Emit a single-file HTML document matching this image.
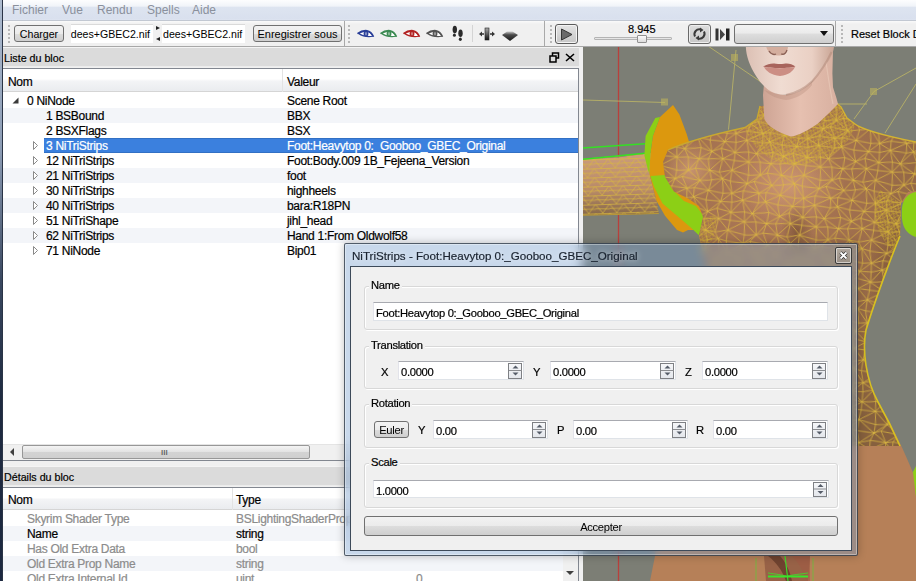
<!DOCTYPE html>
<html><head><meta charset="utf-8">
<style>
*{margin:0;padding:0;box-sizing:border-box}
html,body{width:916px;height:581px;overflow:hidden;background:#f0f0f0}
body{position:relative;font-family:"Liberation Sans",sans-serif;font-size:12px;letter-spacing:0;color:#000}
.a{position:absolute}
.t{position:absolute;white-space:nowrap;line-height:15px;letter-spacing:-0.3px;margin-top:1px;-webkit-text-stroke:0.2px currentColor}
.btn,.glbl{letter-spacing:-0.3px}
/* window border */
#wb{left:0;top:0;width:3px;height:581px;z-index:5;background:linear-gradient(90deg,transparent 0,transparent 2px,#2a3446 2px),linear-gradient(#aebcd0 0,#8c9cb4 150px,#3a4860 280px,#1e2a40 400px,#1c2840 581px)}
#menu{left:3px;top:0;width:913px;height:21px;background:linear-gradient(#fdfdfe 0,#f1f4f9 6px,#dde4f0 7.5px,#d9e0ee 19px,#dfe5f1 20px);border-bottom:1px solid #c2c8d2}
#menu span{position:absolute;top:3px;color:#8a909c;font-size:12px}
#tool{left:3px;top:21px;width:913px;height:26px;background:linear-gradient(#fafafa 0,#f0f0f0 3px,#f0f0f0 24px);border-bottom:1px solid #a8a8a8}
.btn{position:absolute;border:1px solid #707070;border-radius:3px;background:linear-gradient(#f2f2f2 0,#ebebeb 50%,#dddddd 50%,#cfcfcf 100%);text-align:center;line-height:15px;padding-top:1px}
.fld{position:absolute;background:#fff;overflow:hidden;white-space:nowrap}
.grip{position:absolute;width:2px;background:repeating-linear-gradient(#b8b8b8 0,#b8b8b8 2px,transparent 2px,transparent 4px)}
.dtitle{position:absolute;background:#dbdbdb;border-top:1px solid #f4f4f4;border-bottom:1px solid #ececec}
.tree{position:absolute;background:#fff;border:1px solid #828790;border-left:none}
.hdr{position:absolute;height:23px;background:linear-gradient(#fff 0,#fff 45%,#f3f4f6 55%,#eaecef 100%);border-bottom:1px solid #d5d5d5}
.row{position:absolute;height:15px;width:100%}
.alt{background:#f3f5f9}
.sel{background:#3c7fd8;color:#fff}
.gray{color:#8c8c8c}
#vp{left:583px;top:46px;width:333px;height:535px;background:#7c7b72;overflow:hidden}
#dlg{left:344px;top:243px;width:514px;height:313px}
.grp{position:absolute;border:1px solid #d8d8d8;border-radius:3px;box-shadow:inset 1px 1px 0 #fff,1px 1px 0 #fff}
.glbl{position:absolute;background:#f0f0f0;padding:0 2px;line-height:15px;-webkit-text-stroke:0.2px currentColor}
.sp{position:absolute;background:#fff;border:1px solid #dfe3e8;border-top-color:#a8aab0;border-left-color:#e2e3ea}
.spb{position:absolute;right:1px;top:1px;width:14px;bottom:1px;border:1px solid #7e8084;background:linear-gradient(#f6f7f9,#e4e7ec)}
</style></head><body>
<div class="a" id="wb"></div>
<div class="a" id="menu">
<span style="left:9px">Fichier</span><span style="left:59px">Vue</span><span style="left:94px">Rendu</span><span style="left:144px">Spells</span><span style="left:189px">Aide</span>
</div>
<div class="a" id="tool"></div>
<div class="a" style="left:344px;top:21px;width:1px;height:25px;background:#a9a9a9"></div>
<div class="a" style="left:544px;top:21px;width:1px;height:25px;background:#a9a9a9"></div>
<div class="a" style="left:835px;top:21px;width:1px;height:25px;background:#a9a9a9"></div>

<div class="grip" style="left:8px;top:25px;height:18px"></div>
<div class="btn" style="left:14px;top:25px;width:50px;height:17px;font-size:10.6px;letter-spacing:0">Charger</div>
<div class="fld" style="left:71px;top:24px;width:82px;height:19px;font-size:10.6px;letter-spacing:0;border-top:1px solid #dadada"><span style="position:absolute;right:3px;top:3px;line-height:13px">dees+GBEC2.nif</span></div>
<svg class="a" style="left:155px;top:25px" width="6" height="17"><path d="M1 1 L5 3 L1 5 Z M5 12 L1 14 L5 16 Z" fill="#222"/></svg>
<div class="fld" style="left:162px;top:24px;width:83px;height:19px;font-size:10.6px;letter-spacing:0;border-top:1px solid #dadada"><span style="position:absolute;left:1px;top:3px;line-height:13px">dees+GBEC2.nif</span></div>
<div class="btn" style="left:253px;top:25px;width:89px;height:17px;font-size:11px;letter-spacing:0">Enregistrer sous</div>
<div class="grip" style="left:348px;top:25px;height:18px"></div>
<div class="grip" style="left:550px;top:25px;height:18px"></div>
<div class="grip" style="left:841px;top:25px;height:18px"></div>
<div class="t" style="left:851px;top:26px;font-size:11px;letter-spacing:0">Reset Block Details</div>
<!-- eyes -->
<svg class="a" style="left:356px;top:28px" width="90" height="13">
<defs>
<g id="eye"><path d="M2.5 5.5 C5 3.8 8 3.2 10.5 3.4 C13.5 3.7 15.5 5.5 16.8 8.3 C13 8.9 7 8.5 2.5 5.5 Z" fill="#fff" stroke="currentColor" stroke-width="1.1"/><path d="M1.5 5.6 C5 3 8.5 2.4 11 2.7 C14 3.1 16 5 17.5 8.8" fill="none" stroke="currentColor" stroke-width="1.6"/><ellipse cx="10" cy="5.8" rx="2.4" ry="2.6" fill="currentColor"/><ellipse cx="10" cy="5.8" rx="1.1" ry="1.7" fill="#fff" opacity="0.4"/></g>
</defs>
<use href="#eye" x="0" y="0" style="color:#2a3f98"/>
<use href="#eye" x="23" y="0" style="color:#3c8a52"/>
<use href="#eye" x="46" y="0" style="color:#b22222"/>
<use href="#eye" x="69" y="0" style="color:#545454"/>
</svg>
<!-- footprints -->
<svg class="a" style="left:451px;top:25px" width="14" height="18">
<ellipse cx="3.8" cy="4.5" rx="2.2" ry="3.8" fill="#2a2a2a"/><ellipse cx="3.4" cy="10.2" rx="1.5" ry="1.6" fill="#2a2a2a"/>
<ellipse cx="9.5" cy="8.3" rx="2.2" ry="3.8" fill="#2a2a2a"/><ellipse cx="9.3" cy="14.2" rx="1.5" ry="1.7" fill="#2a2a2a"/>
</svg>
<div class="a" style="left:472px;top:25px;width:1px;height:17px;background:#d4d4d4"></div>
<!-- move -->
<svg class="a" style="left:478px;top:27px" width="18" height="14">
<defs><linearGradient id="bar" x1="0" y1="0" x2="0" y2="1"><stop offset="0" stop-color="#aaa"/><stop offset="1" stop-color="#111"/></linearGradient></defs>
<rect x="7" y="1" width="4" height="12" fill="url(#bar)" stroke="#222" stroke-width="0.6"/>
<path d="M1 7 L4 4.5 L4 9.5 Z M17 7 L14 4.5 L14 9.5 Z" fill="#333"/><path d="M3 7 H6 M12 7 H15" stroke="#333" stroke-width="1.4"/>
</svg>
<!-- diamond -->
<svg class="a" style="left:501px;top:30px" width="18" height="12">
<defs><linearGradient id="dia" x1="0" y1="0" x2="0" y2="1"><stop offset="0" stop-color="#c8c8c8"/><stop offset="0.35" stop-color="#4a4a4a"/><stop offset="1" stop-color="#1a1a1a"/></linearGradient></defs>
<path d="M1 5 L6 1.5 L11.5 1.5 L17 5 L9 11 Z" fill="url(#dia)"/>
</svg>
<!-- play button -->
<div class="a" style="left:555px;top:24px;width:23px;height:20px;border:1px solid #5a5a5a;border-radius:3px;background:linear-gradient(#e4e4e4,#c6c6c6);box-shadow:inset 0 0 0 1px #f4f4f4"></div>
<svg class="a" style="left:560px;top:28px" width="13" height="13"><path d="M1.5 1 L12 6.5 L1.5 12 Z" fill="#6a6a6a" stroke="#2a2a2a" stroke-width="0.9"/></svg>
<!-- slider -->
<div class="t" style="left:628px;top:21px;font-size:11px;letter-spacing:0">8.945</div>
<div class="a" style="left:594px;top:37px;width:78px;height:3px;border:1px solid #b4b4b4;background:#e6e6e6;border-radius:1px"></div>
<div class="a" style="left:637px;top:35px;width:10px;height:8px;border:1px solid #909090;border-radius:1px;background:linear-gradient(#fbfbfb,#dcdcdc)"></div>
<!-- loop button -->
<div class="a" style="left:688px;top:24px;width:23px;height:20px;border:1px solid #6a6a6a;border-radius:3px;background:linear-gradient(#dedede,#c8c8c8);box-shadow:inset 0 0 0 1px #eee"></div>
<svg class="a" style="left:692px;top:27px" width="15" height="14"><path d="M3 9.5 A5 5 0 0 1 9 2.5" stroke="#3a3a3a" stroke-width="2" fill="none"/><path d="M8 0.5 L11.5 3 L8 5.5 Z" fill="#3a3a3a"/><path d="M12 4.5 A5 5 0 0 1 6 11.5" stroke="#3a3a3a" stroke-width="2" fill="none"/><path d="M7 13.5 L3.5 11 L7 8.5 Z" fill="#3a3a3a"/></svg>
<!-- next -->
<svg class="a" style="left:715px;top:28px" width="15" height="13"><rect x="0.5" y="0.5" width="3" height="12" fill="#333"/><path d="M5 1 L10 6.5 L5 12 Z" fill="#444"/><rect x="11" y="0.5" width="3.5" height="12" fill="#222"/></svg>
<!-- combo -->
<div class="a" style="left:734px;top:24px;width:100px;height:20px;border:1px solid #707070;border-radius:3px;background:linear-gradient(#f2f2f2 0,#ebebeb 45%,#dddddd 50%,#cfcfcf 100%)"></div>
<svg class="a" style="left:820px;top:31px" width="9" height="6"><path d="M0 0 H8 L4 5 Z" fill="#111"/></svg>
<!-- Liste du bloc dock -->
<div class="dtitle" style="left:3px;top:47px;width:576px;height:20px"></div>
<div class="t" style="left:4px;top:50px;font-size:10.7px;letter-spacing:0">Liste du bloc</div>
<!-- dock buttons -->
<svg class="a" style="left:549px;top:52px" width="11" height="11"><rect x="3.5" y="1" width="6" height="5" fill="none" stroke="#000" stroke-width="1.5"/><rect x="1" y="4" width="6" height="6" fill="#dcdcdc" stroke="#000" stroke-width="1.5"/></svg>
<svg class="a" style="left:565px;top:53px" width="10" height="9"><path d="M1 1 L9 8 M9 1 L1 8" stroke="#000" stroke-width="1.6"/></svg>



<div class="a" style="left:3px;top:68px;width:576px;height:393px;background:#fff;border-top:1px solid #828790;border-right:1px solid #828790;border-bottom:1px solid #828790"></div>
<div class="hdr" style="left:3px;top:69px;width:575px"></div>
<div class="a" style="left:282px;top:69px;width:1px;height:23px;background:#e3e3e3"></div>
<div class="t" style="left:8px;top:74px">Nom</div>
<div class="t" style="left:287px;top:74px">Valeur</div>
<svg class="a" style="left:12px;top:97px" width="8" height="8"><path d="M6.5 0.5 L6.5 6.5 L0.5 6.5 Z" fill="#3a3a3a"/></svg>
<div class="t" style="left:27px;top:93px;color:#000">0 NiNode</div>
<div class="t" style="left:287px;top:93px;color:#000">Scene Root</div>
<div class="a alt" style="left:3px;top:108px;width:575px;height:15px"></div>
<div class="t" style="left:46px;top:108px;color:#000">1 BSBound</div>
<div class="t" style="left:287px;top:108px;color:#000">BBX</div>
<div class="t" style="left:46px;top:123px;color:#000">2 BSXFlags</div>
<div class="t" style="left:287px;top:123px;color:#000">BSX</div>
<div class="a sel" style="left:44px;top:138px;width:534px;height:15px;border-top:1px solid #3270c4;border-bottom:1px solid #3270c4;background:#3b80de"></div>
<svg class="a" style="left:32px;top:141px" width="8" height="10"><path d="M1.5 0.5 L5.5 4.5 L1.5 8.5 Z" fill="#fff" stroke="#8a8a8a"/></svg>
<div class="t" style="left:46px;top:138px;color:#fff">3 NiTriStrips</div>
<div class="t" style="left:287px;top:138px;color:#fff">Foot:Heavytop 0:_Gooboo_GBEC_Original</div>
<svg class="a" style="left:32px;top:156px" width="8" height="10"><path d="M1.5 0.5 L5.5 4.5 L1.5 8.5 Z" fill="#fff" stroke="#8a8a8a"/></svg>
<div class="t" style="left:46px;top:153px;color:#000">12 NiTriStrips</div>
<div class="t" style="left:287px;top:153px;color:#000">Foot:Body.009 1B_Fejeena_Version</div>
<div class="a alt" style="left:3px;top:168px;width:575px;height:15px"></div>
<svg class="a" style="left:32px;top:171px" width="8" height="10"><path d="M1.5 0.5 L5.5 4.5 L1.5 8.5 Z" fill="#fff" stroke="#8a8a8a"/></svg>
<div class="t" style="left:46px;top:168px;color:#000">21 NiTriStrips</div>
<div class="t" style="left:287px;top:168px;color:#000">foot</div>
<svg class="a" style="left:32px;top:186px" width="8" height="10"><path d="M1.5 0.5 L5.5 4.5 L1.5 8.5 Z" fill="#fff" stroke="#8a8a8a"/></svg>
<div class="t" style="left:46px;top:183px;color:#000">30 NiTriStrips</div>
<div class="t" style="left:287px;top:183px;color:#000">highheels</div>
<div class="a alt" style="left:3px;top:198px;width:575px;height:15px"></div>
<svg class="a" style="left:32px;top:201px" width="8" height="10"><path d="M1.5 0.5 L5.5 4.5 L1.5 8.5 Z" fill="#fff" stroke="#8a8a8a"/></svg>
<div class="t" style="left:46px;top:198px;color:#000">40 NiTriStrips</div>
<div class="t" style="left:287px;top:198px;color:#000">bara:R18PN</div>
<svg class="a" style="left:32px;top:216px" width="8" height="10"><path d="M1.5 0.5 L5.5 4.5 L1.5 8.5 Z" fill="#fff" stroke="#8a8a8a"/></svg>
<div class="t" style="left:46px;top:213px;color:#000">51 NiTriShape</div>
<div class="t" style="left:287px;top:213px;color:#000">jihl_head</div>
<div class="a alt" style="left:3px;top:228px;width:575px;height:15px"></div>
<svg class="a" style="left:32px;top:231px" width="8" height="10"><path d="M1.5 0.5 L5.5 4.5 L1.5 8.5 Z" fill="#fff" stroke="#8a8a8a"/></svg>
<div class="t" style="left:46px;top:228px;color:#000">62 NiTriStrips</div>
<div class="t" style="left:287px;top:228px;color:#000">Hand 1:From Oldwolf58</div>
<svg class="a" style="left:32px;top:246px" width="8" height="10"><path d="M1.5 0.5 L5.5 4.5 L1.5 8.5 Z" fill="#fff" stroke="#8a8a8a"/></svg>
<div class="t" style="left:46px;top:243px;color:#000">71 NiNode</div>
<div class="t" style="left:287px;top:243px;color:#000">Bip01</div>
<!-- hscroll -->
<div class="a" style="left:3px;top:444px;width:575px;height:16px;background:#f0f0f0;border-top:1px solid #e4e4e4"></div>
<svg class="a" style="left:9px;top:448px" width="6" height="8"><path d="M5 0 L5 8 L1 4 Z" fill="#404040"/></svg>
<div class="a" style="left:22px;top:445px;width:288px;height:14px;border:1px solid #979797;border-radius:2px;background:linear-gradient(#f4f4f4,#e2e2e2 50%,#d3d3d3 51%,#cfcfcf)"></div>
<div class="t" style="left:161px;top:444px;font-size:8px;letter-spacing:0;color:#555">III</div>

<!-- details dock -->
<div class="dtitle" style="left:3px;top:466px;width:576px;height:20px"></div>
<div class="t" style="left:4px;top:469px;font-size:10.7px;letter-spacing:0">Détails du bloc</div>
<div class="a" style="left:3px;top:487px;width:576px;height:100px;background:#fff;border-top:1px solid #828790;border-right:1px solid #828790"></div>
<div class="hdr" style="left:3px;top:488px;width:575px;height:22px"></div>
<div class="a" style="left:232px;top:488px;width:1px;height:22px;background:#e3e3e3"></div>
<div class="t" style="left:8px;top:492px">Nom</div>
<div class="t" style="left:236px;top:492px">Type</div>
<div class="a" style="left:563px;top:488px;width:15px;height:93px;background:#f0f0f0"></div>
<div class="t" style="left:27px;top:511px;color:#8c8c8c">Skyrim Shader Type</div>
<div class="t" style="left:236px;top:511px;color:#8c8c8c">BSLightingShaderProperty</div>
<div class="a alt" style="left:3px;top:526px;width:560px;height:15px"></div>
<div class="t" style="left:27px;top:526px;color:#000">Name</div>
<div class="t" style="left:236px;top:526px;color:#000">string</div>
<div class="t" style="left:27px;top:541px;color:#8c8c8c">Has Old Extra Data</div>
<div class="t" style="left:236px;top:541px;color:#8c8c8c">bool</div>
<div class="a alt" style="left:3px;top:556px;width:560px;height:15px"></div>
<div class="t" style="left:27px;top:556px;color:#8c8c8c">Old Extra Prop Name</div>
<div class="t" style="left:236px;top:556px;color:#8c8c8c">string</div>
<div class="t" style="left:27px;top:571px;color:#8c8c8c">Old Extra Internal Id</div>
<div class="t" style="left:236px;top:571px;color:#8c8c8c">uint</div>
<div class="t" style="left:416px;top:571px;color:#8c8c8c">0</div>
<svg class="a" style="left:566px;top:571px" width="8" height="5"><path d="M0 0 L8 0 L4 4 Z" fill="#404040"/></svg>

<svg class="a" style="left:583px;top:47px" width="333" height="534" viewBox="583 47 333 534">
<defs>
<pattern id="mesh" patternUnits="userSpaceOnUse" width="72" height="60" patternTransform="rotate(4)"><path d="M-11.6 -10.3L-2.4 -11.0M-11.6 -10.3L-14.5 -0.8M-11.6 -10.3L-0.3 0.3M-2.4 -11.0L12.2 -12.2M-2.4 -11.0L-0.3 0.3M12.2 -12.2L-0.3 0.3M12.2 -12.2L23.7 -11.1M12.2 -12.2L9.5 1.5M12.2 -12.2L22.1 -1.3M23.7 -11.1L38.1 -10.6M23.7 -11.1L22.1 -1.3M38.1 -10.6L22.1 -1.3M38.1 -10.6L49.7 -11.2M38.1 -10.6L39.0 2.5M38.1 -10.6L50.7 1.7M49.7 -11.2L60.4 -10.3M49.7 -11.2L50.7 1.7M60.4 -10.3L50.7 1.7M60.4 -10.3L69.6 -11.0M60.4 -10.3L57.5 -0.8M60.4 -10.3L71.7 0.3M69.6 -11.0L84.2 -12.2M69.6 -11.0L71.7 0.3M84.2 -12.2L71.7 0.3M-14.5 -0.8L-0.3 0.3M-14.5 -0.8L-9.2 11.3M-0.3 0.3L-9.2 11.3M-0.3 0.3L9.5 1.5M-0.3 0.3L2.5 9.8M-0.3 0.3L13.2 7.7M9.5 1.5L22.1 -1.3M9.5 1.5L13.2 7.7M22.1 -1.3L13.2 7.7M22.1 -1.3L39.0 2.5M22.1 -1.3L21.2 9.8M22.1 -1.3L38.0 11.0M39.0 2.5L50.7 1.7M39.0 2.5L38.0 11.0M50.7 1.7L38.0 11.0M50.7 1.7L57.5 -0.8M50.7 1.7L45.0 8.5M50.7 1.7L62.8 11.3M57.5 -0.8L71.7 0.3M57.5 -0.8L62.8 11.3M71.7 0.3L62.8 11.3M71.7 0.3L81.5 1.5M71.7 0.3L74.5 9.8M71.7 0.3L85.2 7.7M-9.2 11.3L2.5 9.8M-9.2 11.3L-14.3 18.7M-9.2 11.3L0.0 20.4M2.5 9.8L13.2 7.7M2.5 9.8L0.0 20.4M13.2 7.7L0.0 20.4M13.2 7.7L21.2 9.8M13.2 7.7L14.9 22.3M13.2 7.7L23.6 21.7M21.2 9.8L38.0 11.0M21.2 9.8L23.6 21.7M38.0 11.0L23.6 21.7M38.0 11.0L45.0 8.5M38.0 11.0L34.9 18.6M38.0 11.0L50.5 19.8M45.0 8.5L62.8 11.3M45.0 8.5L50.5 19.8M62.8 11.3L50.5 19.8M62.8 11.3L74.5 9.8M62.8 11.3L57.7 18.7M62.8 11.3L72.0 20.4M74.5 9.8L85.2 7.7M74.5 9.8L72.0 20.4M85.2 7.7L72.0 20.4M-14.3 18.7L0.0 20.4M-14.3 18.7L-14.4 27.8M0.0 20.4L-14.4 27.8M0.0 20.4L14.9 22.3M0.0 20.4L-1.9 30.1M0.0 20.4L12.9 30.6M14.9 22.3L23.6 21.7M14.9 22.3L12.9 30.6M23.6 21.7L12.9 30.6M23.6 21.7L34.9 18.6M23.6 21.7L24.1 30.7M23.6 21.7L34.7 27.9M34.9 18.6L50.5 19.8M34.9 18.6L34.7 27.9M50.5 19.8L34.7 27.9M50.5 19.8L57.7 18.7M50.5 19.8L50.9 29.5M50.5 19.8L57.6 27.8M57.7 18.7L72.0 20.4M57.7 18.7L57.6 27.8M72.0 20.4L57.6 27.8M72.0 20.4L86.9 22.3M72.0 20.4L70.1 30.1M72.0 20.4L84.9 30.6M-14.4 27.8L-1.9 30.1M-14.4 27.8L-10.2 38.4M-14.4 27.8L0.8 41.5M-1.9 30.1L12.9 30.6M-1.9 30.1L0.8 41.5M12.9 30.6L0.8 41.5M12.9 30.6L24.1 30.7M12.9 30.6L9.9 37.6M12.9 30.6L24.0 40.8M24.1 30.7L34.7 27.9M24.1 30.7L24.0 40.8M34.7 27.9L24.0 40.8M34.7 27.9L50.9 29.5M34.7 27.9L37.6 39.5M34.7 27.9L45.4 40.6M50.9 29.5L57.6 27.8M50.9 29.5L45.4 40.6M57.6 27.8L45.4 40.6M57.6 27.8L70.1 30.1M57.6 27.8L61.8 38.4M57.6 27.8L72.8 41.5M70.1 30.1L84.9 30.6M70.1 30.1L72.8 41.5M84.9 30.6L72.8 41.5M-10.2 38.4L0.8 41.5M-10.2 38.4L-11.6 49.7M0.8 41.5L-11.6 49.7M0.8 41.5L9.9 37.6M0.8 41.5L-2.4 49.0M0.8 41.5L12.2 47.8M9.9 37.6L24.0 40.8M9.9 37.6L12.2 47.8M24.0 40.8L12.2 47.8M24.0 40.8L37.6 39.5M24.0 40.8L23.7 48.9M24.0 40.8L38.1 49.4M37.6 39.5L45.4 40.6M37.6 39.5L38.1 49.4M45.4 40.6L38.1 49.4M45.4 40.6L61.8 38.4M45.4 40.6L49.7 48.8M45.4 40.6L60.4 49.7M61.8 38.4L72.8 41.5M61.8 38.4L60.4 49.7M72.8 41.5L60.4 49.7M72.8 41.5L81.9 37.6M72.8 41.5L69.6 49.0M72.8 41.5L84.2 47.8M-11.6 49.7L-2.4 49.0M-11.6 49.7L-14.5 59.2M-11.6 49.7L-0.3 60.3M-2.4 49.0L12.2 47.8M-2.4 49.0L-0.3 60.3M12.2 47.8L-0.3 60.3M12.2 47.8L23.7 48.9M12.2 47.8L9.5 61.5M12.2 47.8L22.1 58.7M23.7 48.9L38.1 49.4M23.7 48.9L22.1 58.7M38.1 49.4L22.1 58.7M38.1 49.4L49.7 48.8M38.1 49.4L39.0 62.5M38.1 49.4L50.7 61.7M49.7 48.8L60.4 49.7M49.7 48.8L50.7 61.7M60.4 49.7L50.7 61.7M60.4 49.7L69.6 49.0M60.4 49.7L57.5 59.2M60.4 49.7L71.7 60.3M69.6 49.0L84.2 47.8M69.6 49.0L71.7 60.3M84.2 47.8L71.7 60.3M-14.5 59.2L-0.3 60.3M-14.5 59.2L-9.2 71.3M-0.3 60.3L-9.2 71.3M-0.3 60.3L9.5 61.5M-0.3 60.3L2.5 69.8M-0.3 60.3L13.2 67.7M9.5 61.5L22.1 58.7M9.5 61.5L13.2 67.7M22.1 58.7L13.2 67.7M22.1 58.7L39.0 62.5M22.1 58.7L21.2 69.8M22.1 58.7L38.0 71.0M39.0 62.5L50.7 61.7M39.0 62.5L38.0 71.0M50.7 61.7L38.0 71.0M50.7 61.7L57.5 59.2M50.7 61.7L45.0 68.5M50.7 61.7L62.8 71.3M57.5 59.2L71.7 60.3M57.5 59.2L62.8 71.3M71.7 60.3L62.8 71.3M71.7 60.3L81.5 61.5M71.7 60.3L74.5 69.8M71.7 60.3L85.2 67.7" stroke="#e0bc40" stroke-width="0.7" fill="none"/></pattern>
<pattern id="mesh2" patternUnits="userSpaceOnUse" width="5" height="5" patternTransform="rotate(25)">
<path d="M0 0 L5 0 M0 0 L2.5 5 M5 0 L2.5 5" stroke="#d8bc28" stroke-width="0.7" fill="none"/>
</pattern>
<pattern id="mesh3" patternUnits="userSpaceOnUse" width="14" height="9" patternTransform="rotate(-2)"><path d="M0 0.5 L14 0.5 M0 4.5 L14 5 M0 0 L7 9 M14 0 L7 9" stroke="#d8b840" stroke-width="0.7" fill="none"/></pattern>
<clipPath id="tclip"><path d="M760 106 L757 119 L745 127.5 C720 133 690 140 668 150 L663 162 L665 177 L674 191.5 L688.5 198.7 L699 206 L703 217 L699 235 C706 270 714 300 716 340 C712 360 705 400 700 446 L900 446 C893 430 886 416 878 402 C866 380 862 350 866 330 C875 300 892 255 900 236 L901 203 L908 192 L916 191 L916 142 C880 135 860 128 855 124 L847 118 L841 107 L836.5 103 Z"/></clipPath>
<linearGradient id="faceg" x1="0" y1="0" x2="1" y2="0">
<stop offset="0" stop-color="#dcc0b4"/><stop offset="0.4" stop-color="#f0dcd2"/><stop offset="0.75" stop-color="#ead0c4"/><stop offset="1" stop-color="#c8a494"/>
</linearGradient>
<linearGradient id="neckg" x1="0" y1="0" x2="1" y2="0">
<stop offset="0" stop-color="#cea494"/><stop offset="0.5" stop-color="#e6c0b0"/><stop offset="1" stop-color="#d8b0a0"/>
</linearGradient>
<linearGradient id="armg" x1="0" y1="0" x2="0" y2="1">
<stop offset="0" stop-color="#cc9c7c"/><stop offset="0.6" stop-color="#b88a68"/><stop offset="1" stop-color="#86684a"/>
</linearGradient>
<radialGradient id="torsog" cx="0.42" cy="0.22" r="0.8">
<stop offset="0" stop-color="#b07a5a"/><stop offset="0.5" stop-color="#9e6e4c"/><stop offset="1" stop-color="#86603e"/>
</radialGradient>
<radialGradient id="lite" cx="0.5" cy="0.5" r="0.5">
<stop offset="0" stop-color="#e6b08a" stop-opacity="0.55"/><stop offset="1" stop-color="#e6b08a" stop-opacity="0"/>
</radialGradient>
<radialGradient id="dark" cx="0.5" cy="0.5" r="0.5">
<stop offset="0" stop-color="#5a3a22" stop-opacity="0.45"/><stop offset="1" stop-color="#5a3a22" stop-opacity="0"/>
</radialGradient>
</defs>
<rect x="583" y="46" width="333" height="535" fill="#7c7e75"/>
<line x1="618.5" y1="46" x2="618.5" y2="581" stroke="#b8403c" stroke-width="1.3"/>
<g stroke="#c4bc64" stroke-width="1" fill="none" opacity="0.75">
<path d="M583 100 L665 102.5"/>
<path d="M708 46 L761 82"/>
<path d="M736 50 L728.5 129.6"/>
<path d="M916 68 L874 91.5 L854 119"/>
<path d="M837 104 L867 104"/>
<path d="M916 84 L885 133"/>
</g>
<g fill="#bdb35c" opacity="0.6">
<rect x="661" y="98.5" width="7" height="7"/>
<rect x="731" y="54" width="7" height="7"/>
<rect x="870" y="88" width="7" height="7"/>
</g>
<!-- body silhouette skin -->
<path d="M916 142 L930 190 L901 203 L900 236 C892 255 875 300 866 330 C862 350 866 380 878 402 C892 425 904 450 916 480 L930 581 L650 581 L655 556 C660 520 668 470 680 430 C695 390 712 360 716 340 C714 300 706 270 699 235 L703 217 L716 220 L760 200 Z" fill="#b68058"/>
<path d="M764 556 L810 556 L808 581 L766 581 Z" fill="#8e5842" opacity="0.75"/>
<path d="M768 556 C776 562 782 570 786 581 L792 581 C790 570 784 560 780 556 Z" fill="#5e3626" opacity="0.7"/>
<path d="M792 556 C798 562 804 570 806 581 L810 581 L810 556 Z" fill="#a05a44" opacity="0.6"/>
<g stroke="#3ae42a" fill="none">
<path d="M785 556 L788 581" stroke-width="1.1"/>
<path d="M768 576.5 L808 576.5" stroke-width="1.8"/>
<path d="M768 573 C776 574 782 575 786 576 M808 573 C800 574 792 575 788 576" stroke-width="0.8"/>
<path d="M756 558 L756 581 M813 558 L813 581" stroke-width="0.9" opacity="0.55"/>
</g>
<!-- arm -->
<path d="M583 159.3 L617.5 157.6 L643.3 154 L652 153 L650 176 L656.5 201 L658.8 213.5 L634.7 214.4 L583 215.3 Z" fill="url(#armg)"/>
<path d="M583 159.3 L617.5 157.6 L643.3 154 L652 153 L650 176 L656.5 201 L658.8 213.5 L634.7 214.4 L583 215.3 Z" fill="url(#mesh3)"/>
<path d="M583 159.3 L643.3 154" stroke="#c8a838" stroke-width="1.1"/>
<path d="M583 215.3 L658.8 213.5" stroke="#b89838" stroke-width="1.1"/>
<g stroke="#34e024" stroke-width="1.5" fill="none">
<path d="M583 148 L645 143.8"/><path d="M583 159.3 L645 153.3"/>
</g>
<!-- orange crescent -->
<path d="M673 105 L679.4 114.5 L686.6 133.7 L690 145 L700 205 L704 218 L702 230 L688 230 L683 232.5 L677 230 L665 215.7 L656.5 201 L650 176 L649.3 172.3 L650.5 153 L652.9 136 L660 117 Z" fill="#dc980e"/>
<path d="M655.3 118 L660 117 L652.9 136 L650.5 153 L649.3 172.3 L650.5 176 L648 170 L644.4 155.4 L645.6 136 Z" fill="#8ccf16"/>
<path d="M650.5 176 L665 175 L672 189 L684 201 L696 206 L703.5 215.7 L702 230 L698.6 235 L691 227.7 L677 215.7 L662.5 203.6 L654 186.7 Z" fill="#8ccf16"/>
<!-- torso -->
<path d="M760 106 L757 119 L745 127.5 C720 133 690 140 668 150 L663 162 L665 177 L674 191.5 L688.5 198.7 L699 206 L703 217 L699 235 C706 270 714 300 716 340 C712 360 705 400 700 446 L900 446 C893 430 886 416 878 402 C866 380 862 350 866 330 C875 300 892 255 900 236 L901 203 L908 192 L916 191 L916 142 C880 135 860 128 855 124 L847 118 L841 107 L836.5 103 Z" fill="url(#torsog)"/>
<g clip-path="url(#tclip)">
<ellipse cx="790" cy="185" rx="55" ry="45" fill="url(#lite)"/>
<ellipse cx="690" cy="170" rx="30" ry="30" fill="url(#lite)"/>
<ellipse cx="797" cy="232" rx="16" ry="30" fill="url(#dark)"/>
<ellipse cx="905" cy="280" rx="40" ry="90" fill="url(#dark)"/>
</g>
<path d="M760 106 L757 119 L745 127.5 C720 133 690 140 668 150 L663 162 L665 177 L674 191.5 L688.5 198.7 L699 206 L703 217 L699 235 C706 270 714 300 716 340 C712 360 705 400 700 446 L900 446 C893 430 886 416 878 402 C866 380 862 350 866 330 C875 300 892 255 900 236 L901 203 L908 192 L916 191 L916 142 C880 135 860 128 855 124 L847 118 L841 107 L836.5 103 Z" fill="url(#mesh)"/>
<path d="M745 127.5 L757 119 L760 106 L836.5 103 L841 107 L847 118 L855 124 C850 150 820 165 795 165 C770 163 752 150 745 127.5 Z" fill="url(#mesh2)" opacity="0.75"/>
<g fill="none" stroke-width="1.3">
<path d="M855 124 C860 128 880 135 916 142" stroke="#d4b430"/>
<path d="M668 150 C690 140 720 133 745 127.5 L757 119 L760 106" stroke="#c8a830"/>
<path d="M836.5 103 L841 107 L847 118 L855 124" stroke="#d4b430"/>
<path d="M900 236 C892 255 875 300 866 330 C862 350 866 380 878 402 C886 416 893 430 900 446" stroke="#d8c020" stroke-width="1.6"/>
</g>
<path d="M880 190 L901 203 L900 236 L893 250 C880 240 872 220 875 200 Z" fill="url(#mesh2)" opacity="0.8"/>
<path d="M704 218 L699 235 L702 252 C712 245 718 230 716 215 Z" fill="url(#mesh2)" opacity="0.7"/>
<!-- green crescent right -->
<path d="M916 192 C909 193 903 198 902 208 C901 222 903 233 916 237 Z" fill="#8ccf16"/>
<path d="M913 472 L916 466 L916 497 Z" fill="#8ccf16"/>
<!-- neck skin -->
<path d="M764 84 L763 95 L764.3 119 C768 126 775 131 790.8 136.6 C796 136 802.8 133.5 817.3 124 C825 117 832 110 838 104 L836.5 98.3 L833 87.3 L832.4 73.5 L833 50 L812 82 L800 91 L786 95 L775 93 Z" fill="url(#neckg)"/>
<path d="M764 90 C770 96 778 99 786 100 C796 99 806 93 812 85 L812 82 L800 91 L786 94.8 L775 93.2 Z" fill="#b08474" opacity="0.3"/>
<!-- face -->
<path d="M745.8 46 C746 55 749 65 756.7 77 C762 85 768 91 775 93.2 C780 94.5 783 95 786 94.8 C792 94 797 92.5 800 91 C806 87 809 85 812 81.6 C816 77 819 74 821.7 70.8 C825 66 828 62 829.5 60 C832 55 834 50 834 46 Z" fill="url(#faceg)"/>
<path d="M826 62 C828 76 830 90 833 104" stroke="#f0d4c4" stroke-width="1.2" fill="none" opacity="0.45"/>
<path d="M786 95 C795 93.5 805 88 812 81.6 C818 75 826 64 831.5 52" stroke="#b48a7a" stroke-width="2" fill="none" opacity="0.55"/>
<!-- nose -->
<path d="M766 46 C767 50 769 53 772 54.5 C776 56 781 56 785 54 C787 52 788 49 788 46 Z" fill="#d4ae9e"/>
<path d="M769 51 C771 54 774 55 776 54 M781 54 C784 55 786 53 787 50" stroke="#8a6055" stroke-width="1.3" fill="none"/>
<!-- lips -->
<path d="M763 66.5 C768 64 772 63 776 63.8 C779 64.2 781 64.2 784 63.8 C788 63 792 64 795.5 66.5 C790 68.5 770 68.5 763 66.5 Z" fill="#a8645c"/>
<path d="M764 67 C772 68.5 788 68.5 795 67 C793 71 789 75 780 76 C771 75 766 71 764 67 Z" fill="#cc8e84"/>
</svg>


<div class="a" id="dlgf" style="left:344px;top:243px;width:514px;height:313px;border:1px solid rgba(40,50,60,0.75);border-radius:2px;background:rgba(117,157,204,0.4);backdrop-filter:blur(4px);-webkit-backdrop-filter:blur(4px);box-shadow:inset 0 0 0 1px rgba(255,255,255,0.35),0 0 8px rgba(0,0,0,0.25)"></div>
<div class="t" style="left:352px;top:247px;font-size:11.6px;letter-spacing:0;color:#1a2330;text-shadow:0 0 6px rgba(255,255,255,0.8)">NiTriStrips - Foot:Heavytop 0:_Gooboo_GBEC_Original</div>
<div class="a" style="left:835px;top:247px;width:17px;height:17px;border:1px solid #3a3a3a;border-radius:2px;background:linear-gradient(rgba(255,255,255,0.25),rgba(255,255,255,0.05));box-shadow:inset 0 0 0 1px rgba(255,255,255,0.55)"><svg style="position:absolute;left:3px;top:3px" width="9" height="9"><path d="M1.5 1.5 L7.5 7.5 M7.5 1.5 L1.5 7.5" stroke="#333" stroke-width="3.2"/><path d="M1.5 1.5 L7.5 7.5 M7.5 1.5 L1.5 7.5" stroke="#fff" stroke-width="1.8"/></svg></div>
<div class="a" style="left:350px;top:266px;width:502px;height:285px;background:#f0f0f0;border:1px solid #3d4a5a"></div>
<div class="grp" style="left:364px;top:286px;width:474px;height:44px"></div><div class="glbl" style="font-size:11.2px;left:369px;top:278px">Name</div>
<div class="sp" style="left:373px;top:302px;width:455px;height:19px"><div class="t" style="font-size:11.2px;left:2px;top:2px">Foot:Heavytop 0:_Gooboo_GBEC_Original</div></div>
<div class="grp" style="left:364px;top:346px;width:474px;height:43px"></div><div class="glbl" style="font-size:11.2px;left:369px;top:338px">Translation</div>
<div class="t" style="font-size:11.2px;left:381px;top:364px">X</div>
<div class="sp" style="left:398px;top:361px;width:126px;height:19px"><div class="t" style="font-size:11.2px;left:2px;top:2px">0.0000</div><div class="spb" style="right:1px;top:1px;width:14px;height:16px"><svg style="position:absolute;left:0;top:0" width="13" height="13"><line x1="0" y1="6.5" x2="13" y2="6.5" stroke="#8a8c90"/><path d="M3.5 4.5 L6.5 1.5 L9.5 4.5 Z" fill="#555c68"/><path d="M3.5 8.5 L6.5 11.5 L9.5 8.5 Z" fill="#555c68"/></svg></div></div>
<div class="t" style="font-size:11.2px;left:533px;top:364px">Y</div>
<div class="sp" style="left:550px;top:361px;width:126px;height:19px"><div class="t" style="font-size:11.2px;left:2px;top:2px">0.0000</div><div class="spb" style="right:1px;top:1px;width:14px;height:16px"><svg style="position:absolute;left:0;top:0" width="13" height="13"><line x1="0" y1="6.5" x2="13" y2="6.5" stroke="#8a8c90"/><path d="M3.5 4.5 L6.5 1.5 L9.5 4.5 Z" fill="#555c68"/><path d="M3.5 8.5 L6.5 11.5 L9.5 8.5 Z" fill="#555c68"/></svg></div></div>
<div class="t" style="font-size:11.2px;left:685px;top:364px">Z</div>
<div class="sp" style="left:702px;top:361px;width:126px;height:19px"><div class="t" style="font-size:11.2px;left:2px;top:2px">0.0000</div><div class="spb" style="right:1px;top:1px;width:14px;height:16px"><svg style="position:absolute;left:0;top:0" width="13" height="13"><line x1="0" y1="6.5" x2="13" y2="6.5" stroke="#8a8c90"/><path d="M3.5 4.5 L6.5 1.5 L9.5 4.5 Z" fill="#555c68"/><path d="M3.5 8.5 L6.5 11.5 L9.5 8.5 Z" fill="#555c68"/></svg></div></div>
<div class="grp" style="left:364px;top:404px;width:474px;height:44px"></div><div class="glbl" style="font-size:11.2px;left:369px;top:396px">Rotation</div>
<div class="btn" style="font-size:11.2px;left:374px;top:421px;width:35px;height:17px">Euler</div>
<div class="t" style="font-size:11.2px;left:418px;top:422px">Y</div>
<div class="sp" style="left:433px;top:420px;width:115px;height:19px"><div class="t" style="font-size:11.2px;left:2px;top:2px">0.00</div><div class="spb" style="right:1px;top:1px;width:14px;height:16px"><svg style="position:absolute;left:0;top:0" width="13" height="13"><line x1="0" y1="6.5" x2="13" y2="6.5" stroke="#8a8c90"/><path d="M3.5 4.5 L6.5 1.5 L9.5 4.5 Z" fill="#555c68"/><path d="M3.5 8.5 L6.5 11.5 L9.5 8.5 Z" fill="#555c68"/></svg></div></div>
<div class="t" style="font-size:11.2px;left:557px;top:422px">P</div>
<div class="sp" style="left:573px;top:420px;width:115px;height:19px"><div class="t" style="font-size:11.2px;left:2px;top:2px">0.00</div><div class="spb" style="right:1px;top:1px;width:14px;height:16px"><svg style="position:absolute;left:0;top:0" width="13" height="13"><line x1="0" y1="6.5" x2="13" y2="6.5" stroke="#8a8c90"/><path d="M3.5 4.5 L6.5 1.5 L9.5 4.5 Z" fill="#555c68"/><path d="M3.5 8.5 L6.5 11.5 L9.5 8.5 Z" fill="#555c68"/></svg></div></div>
<div class="t" style="font-size:11.2px;left:696px;top:422px">R</div>
<div class="sp" style="left:713px;top:420px;width:115px;height:19px"><div class="t" style="font-size:11.2px;left:2px;top:2px">0.00</div><div class="spb" style="right:1px;top:1px;width:14px;height:16px"><svg style="position:absolute;left:0;top:0" width="13" height="13"><line x1="0" y1="6.5" x2="13" y2="6.5" stroke="#8a8c90"/><path d="M3.5 4.5 L6.5 1.5 L9.5 4.5 Z" fill="#555c68"/><path d="M3.5 8.5 L6.5 11.5 L9.5 8.5 Z" fill="#555c68"/></svg></div></div>
<div class="grp" style="left:364px;top:463px;width:474px;height:45px"></div><div class="glbl" style="font-size:11.2px;left:369px;top:455px">Scale</div>
<div class="sp" style="left:373px;top:480px;width:456px;height:18px"><div class="t" style="font-size:11.2px;left:2px;top:2px">1.0000</div><div class="spb" style="right:1px;top:1px;width:14px;height:15px"><svg style="position:absolute;left:0;top:0" width="13" height="12"><line x1="0" y1="6.0" x2="13" y2="6.0" stroke="#8a8c90"/><path d="M3.5 4.0 L6.5 1.0 L9.5 4.0 Z" fill="#555c68"/><path d="M3.5 8.0 L6.5 11.0 L9.5 8.0 Z" fill="#555c68"/></svg></div></div>
<div class="btn" style="font-size:11.2px;left:364px;top:516px;width:474px;height:20px;line-height:18px">Accepter</div>
</body></html>
